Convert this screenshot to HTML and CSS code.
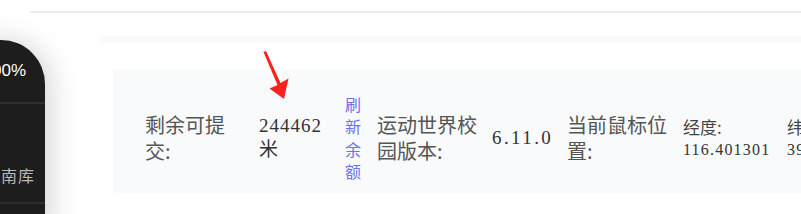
FILE: index.html
```html
<!DOCTYPE html>
<html lang="zh">
<head>
<meta charset="utf-8">
<link rel="stylesheet" href="styles.css">
</head>
<body>
<div class="page">
  <div class="topline"></div>
  <div class="layout">
    <aside class="sidebar">
      <div class="side-item side-top"><span class="pct">100%</span></div>
      <div class="side-item side-lib"><span class="lib">指南库</span></div>
    </aside>
    <main class="main">
      <div class="band"></div>
      <section class="panel">
        <div class="cell c1 label">剩余可提交:</div>
        <div class="cell c2 num">244462 米</div>
        <div class="cell c3 link">刷新余额</div>
        <div class="cell c4 label">运动世界校园版本:</div>
        <div class="cell c5 num version">6.11.0</div>
        <div class="cell c6 label">当前鼠标位置:</div>
        <div class="cell c7 coord"><span class="coord-label">经度:</span><br>116.401301</div>
        <div class="cell c8 coord"><span class="coord-label">纬度:</span><br>39.915119</div>
      </section>
    </main>
  </div>
  <svg class="arrow" width="801" height="214" viewBox="0 0 801 214">
    <polygon points="263.5,52 266,51 280.5,83 288.5,78.5 284,99 269.5,88.5 277.5,85" fill="#ff1f1f"/>
  </svg>
</div>
</body>
</html>
```

FILE: styles.css
```css
html, body {
  margin: 0;
  padding: 0;
  background: #ffffff;
  overflow: hidden;
}
.page {
  position: relative;
  width: 801px;
  height: 214px;
  overflow: hidden;
  font-family: "Noto Sans CJK SC", sans-serif;
}
.topline {
  margin-top: 11px;
  margin-left: 30px;
  height: 2px;
  background: #ebebeb;
}
.layout {
  display: flex;
  align-items: flex-start;
}
.sidebar {
  flex: none;
  width: 100px;
  margin-left: -55px;
  margin-top: 27px;
  height: 200px;
  background: #1d1d1d;
  border-top-right-radius: 44px;
  box-shadow: 6px 0 28px rgba(0, 0, 0, 0.16);
  display: flex;
  flex-direction: column;
}
.side-item {
  display: flex;
  justify-content: flex-end;
  border-bottom: 2px solid #2f2f2f;
}
.side-top {
  height: 62px;
  align-items: center;
  padding-right: 19px;
}
.side-lib {
  height: 81px;
  align-items: flex-end;
  padding-right: 10px;
  padding-bottom: 17px;
}
.pct {
  color: #ffffff;
  font-family: "Liberation Sans", sans-serif;
  font-size: 17px;
  line-height: 20px;
}
.lib {
  color: #b9b9b9;
  font-size: 16px;
  line-height: 20px;
  letter-spacing: 1px;
}
.main {
  flex: 1;
  margin-left: 55px;
  margin-top: 23px;
  min-width: 0;
}
.band {
  height: 7px;
  background: #fafafa;
}
.panel {
  margin-top: 27px;
  margin-left: 13px;
  height: 123px;
  padding-left: 32px;
  padding-top: 12px;
  box-sizing: border-box;
  background: #f9fafc;
  display: flex;
  align-items: center;
  white-space: normal;
}
.cell {
  flex: none;
}
.label {
  color: #555555;
  font-size: 20px;
  line-height: 26px;
}
.num {
  color: #333333;
  font-family: "Liberation Serif", "Noto Sans CJK SC", serif;
  font-size: 19px;
  letter-spacing: 1px;
  line-height: 24px;
}
.version {
  letter-spacing: 2.4px;
}
.link {
  color: #6e6ef2;
  font-size: 16px;
  line-height: 22.5px;
}
.coord {
  color: #333333;
  font-family: "Liberation Serif", serif;
  font-size: 16px;
  letter-spacing: 1.2px;
  line-height: 21px;
}
.coord-label {
  font-family: "Noto Sans CJK SC", sans-serif;
  font-size: 17px;
  letter-spacing: 0;
  color: #444444;
}
.c1 { width: 84px; margin-right: 30px; }
.c2 { width: 66px; margin-right: 20px; }
.c3 { width: 17px; margin-right: 15px; }
.c4 { width: 104px; margin-right: 11px; }
.c5 { width: 62px; margin-right: 13px; }
.c6 { width: 104px; margin-right: 12px; }
.c7 { width: 92px; margin-right: 12px; }
.c8 { width: 92px; }
.arrow {
  position: absolute;
  left: 0;
  top: 0;
  pointer-events: none;
}
```
